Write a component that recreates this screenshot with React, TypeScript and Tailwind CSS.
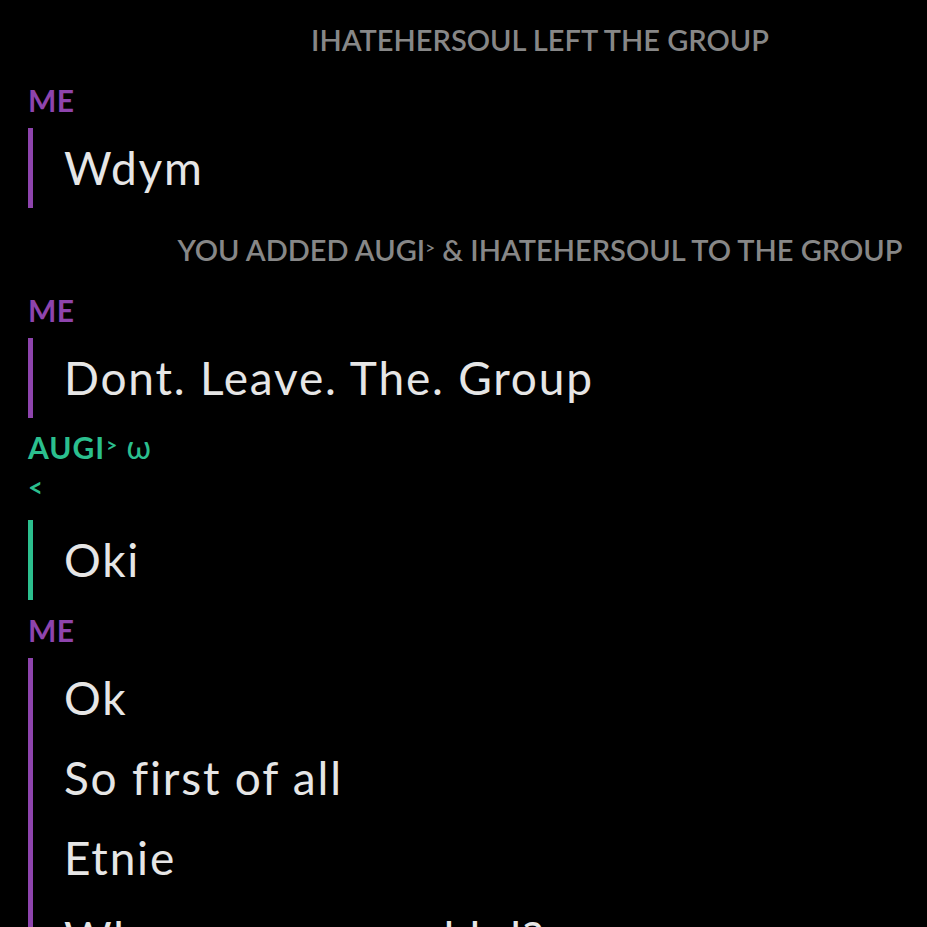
const PURPLE = "#8e44ad";
const GREEN = "#2bbf8e";

type Block =
  | { kind: "system"; text: React.ReactNode; gap: string }
  | { kind: "msg"; who: "me" | "augi"; lines: string[]; gap: string; barGap: string };

const SmallArrow = () => <span className="relative top-[-7px] text-[17px]">&gt;</span>;

const blocks: Block[] = [
  { kind: "system", text: "IHATEHERSOUL LEFT THE GROUP", gap: "mt-0" },
  { kind: "msg", who: "me", lines: ["Wdym"], gap: "mt-5", barGap: "mt-2" },
  {
    kind: "system",
    text: (
      <>
        YOU ADDED AUGI
        <SmallArrow /> &amp; IHATEHERSOUL TO THE GROUP
      </>
    ),
    gap: "mt-[22px]",
  },
  { kind: "msg", who: "me", lines: ["Dont. Leave. The. Group"], gap: "mt-5", barGap: "mt-2" },
  { kind: "msg", who: "augi", lines: ["Oki"], gap: "mt-[9px]", barGap: "mt-[13px]" },
  {
    kind: "msg",
    who: "me",
    lines: ["Ok", "So first of all", "Etnie", "Why are u so mad lol?"],
    gap: "mt-[10px]",
    barGap: "mt-2",
  },
];

function SystemLine({ text, gap }: { text: React.ReactNode; gap: string }) {
  return (
    <div className={`${gap} h-10 overflow-hidden text-center text-[29px] leading-10 font-semibold text-[#878787]`}>
      {text}
    </div>
  );
}

function Label({ who }: { who: "me" | "augi" }) {
  if (who === "me") {
    return (
      <div className="h-10 text-[30px] leading-10 font-bold tracking-[0.5px]" style={{ color: PURPLE }}>
        ME
      </div>
    );
  }
  return (
    <div className="text-[30px] leading-10 font-bold tracking-[1px]" style={{ color: GREEN }}>
      <div className="h-10 overflow-visible">
        AUGI
        <span className="relative top-[-7px] ml-[1px] text-[19px]">&gt;</span>{" "}
        <span className="font-normal text-[32px] leading-none">ω</span>
      </div>
      <div className="h-10 text-[26px]">&lt;</div>
    </div>
  );
}

function Message({ who, lines, gap, barGap }: { who: "me" | "augi"; lines: string[]; gap: string; barGap: string }) {
  return (
    <div className={`${gap} pl-[28px]`}>
      <Label who={who} />
      <div className={`${barGap} flex`}>
        <div className="w-[5px] shrink-0" style={{ backgroundColor: who === "me" ? PURPLE : GREEN }} />
        <div className="pl-[31px] flex flex-col">
          {lines.map((l) => (
            <div key={l} className="h-20 text-[46px] leading-20 tracking-[1.8px] text-[#e6e6e6]">
              {l}
            </div>
          ))}
        </div>
      </div>
    </div>
  );
}

export default function App() {
  return (
    <div className="w-[927px] h-[927px] overflow-hidden bg-black font-['Lato',sans-serif]">
      <div className="w-[1080px] pt-5 flex flex-col">
        {blocks.map((b, i) =>
          b.kind === "system" ? (
            <SystemLine key={i} text={b.text} gap={b.gap} />
          ) : (
            <Message key={i} who={b.who} lines={b.lines} gap={b.gap} barGap={b.barGap} />
          )
        )}
      </div>
    </div>
  );
}
